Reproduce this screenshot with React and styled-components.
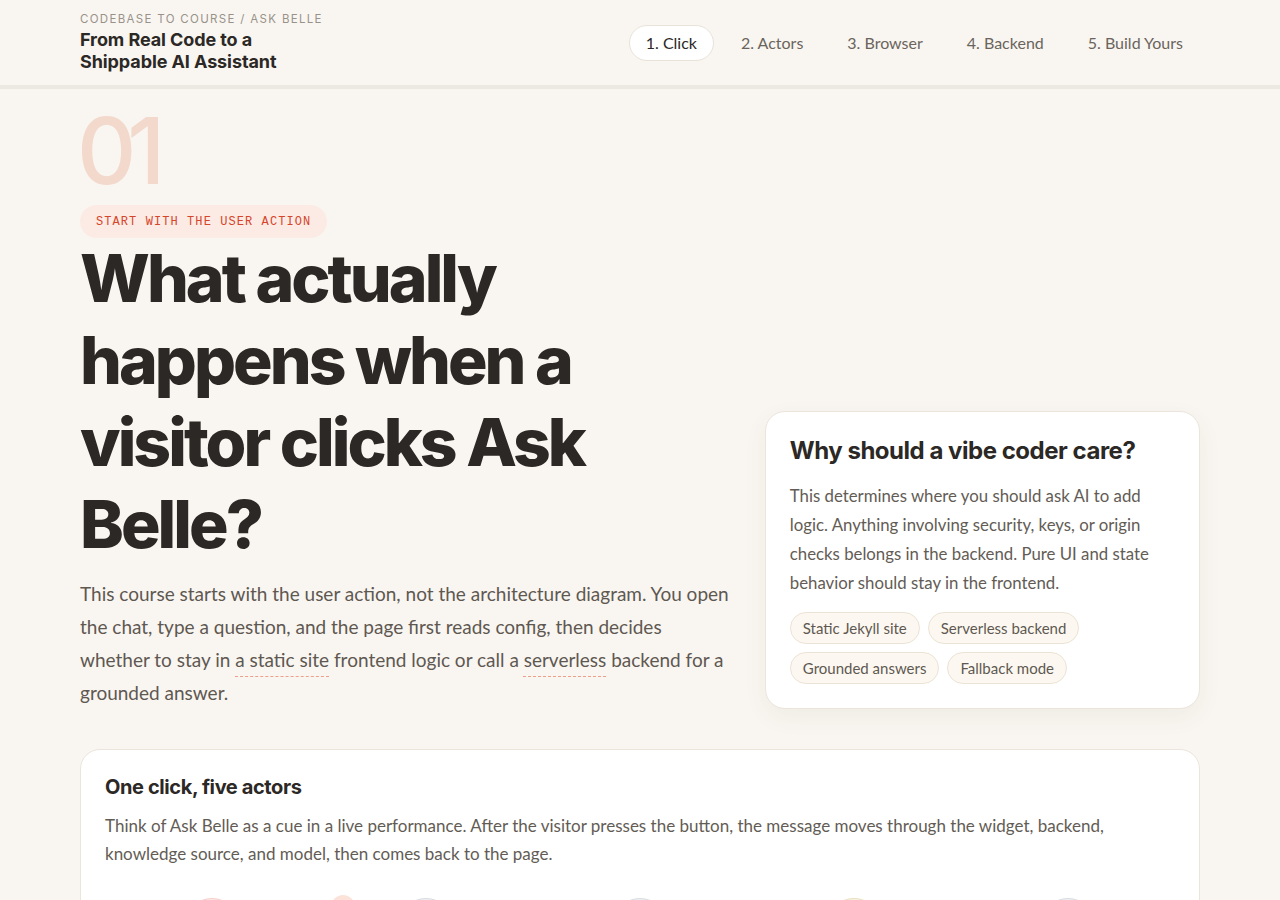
import React from "react";
import styled, { createGlobalStyle } from "styled-components";

const Global = createGlobalStyle`
  * { box-sizing: border-box; }
  html, body { margin: 0; padding: 0; }
  body {
    background: #f9f6f1;
    font-family: "Lato", "Noto Sans", sans-serif;
    color: #2b2825;
  }
`;

const Page = styled.div`
  min-height: 900px;
  background: #f9f6f1;
`;

const TopBar = styled.header`
  border-bottom: 4px solid #ece8e2;
  background: #f9f6f1;
`;

const TopInner = styled.div`
  max-width: 1120px;
  margin: 0 auto;
  height: 85px;
  display: flex;
  align-items: center;
  justify-content: space-between;
`;

const Brand = styled.div`
  display: flex;
  flex-direction: column;
  gap: 3px;
`;

const Crumb = styled.div`
  font-family: "Inter", sans-serif;
  font-size: 11.5px;
  letter-spacing: 0.115em;
  color: #98928a;
  text-transform: uppercase;
`;

const BrandTitle = styled.div`
  font-family: "Inter", sans-serif;
  font-weight: 700;
  font-size: 18px;
  line-height: 22px;
  letter-spacing: -0.005em;
  color: #2b2825;
  width: 220px;
`;

const Nav = styled.nav`
  display: flex;
  gap: 10px;
`;

const NavItem = styled.a`
  font-family: "Lato", sans-serif;
  font-size: 16px;
  height: 36px;
  padding: 0 16px;
  display: flex;
  align-items: center;
  border-radius: 999px;
  border: 1px solid ${(p) => (p.$active ? "#e9e2d8" : "transparent")};
  background: ${(p) => (p.$active ? "#ffffff" : "transparent")};
  color: ${(p) => (p.$active ? "#2b2825" : "#6b645c")};
  text-decoration: none;
`;

const Main = styled.main`
  max-width: 1120px;
  margin: 0 auto;
  padding-top: 16px;
`;

const Hero = styled.section`
  display: grid;
  grid-template-columns: 1.5fr 1fr;
  gap: 32px;
  align-items: end;
`;

const HeroText = styled.div`
  display: flex;
  flex-direction: column;
  align-items: flex-start;
`;

const StepNum = styled.div`
  font-family: "Inter", sans-serif;
  font-weight: 500;
  font-size: 92px;
  line-height: 92px;
  letter-spacing: -0.1em;
  color: #f3d8cc;
  margin-left: -3px;
`;

const Label = styled.span`
  margin-top: 8px;
  font-family: "Liberation Mono", "DejaVu Sans Mono", monospace;
  font-size: 12px;
  letter-spacing: 0.09em;
  color: #d5452a;
  background: #fcebe5;
  border-radius: 999px;
  height: 33px;
  padding: 0 16px;
  display: flex;
  align-items: center;
`;

const Headline = styled.h1`
  margin: -1px 0 0;
  font-family: "Inter", sans-serif;
  font-weight: 800;
  font-size: 66px;
  line-height: 82px;
  letter-spacing: -0.045em;
  color: #2b2825;
  max-width: 540px;
`;

const Lead = styled.p`
  margin: 12px 0 0;
  font-size: 19px;
  line-height: 33px;
  color: #5f5851;
`;

const Term = styled.span`
  text-decoration: underline dashed #ee9f8a 1px;
  text-underline-offset: 9px;
`;

const Card = styled.div`
  background: #ffffff;
  border: 1px solid #ebe5dc;
  border-radius: 20px;
  box-shadow: 0 8px 24px rgba(80, 60, 30, 0.06);
  padding: 24px;
`;

const CardTitle = styled.h2`
  margin: 0;
  font-family: "Inter", sans-serif;
  font-weight: 700;
  font-size: 24px;
  line-height: 30px;
  letter-spacing: -0.02em;
  color: #2b2825;
`;

const CardBody = styled.p`
  margin: 15px 0 0;
  font-size: 16.8px;
  line-height: 29px;
  color: #635c55;
`;

const Tags = styled.div`
  margin-top: 15px;
  display: flex;
  flex-wrap: wrap;
  gap: 8px;
`;

const Tag = styled.span`
  height: 32px;
  padding: 0 12px;
  display: flex;
  align-items: center;
  border-radius: 999px;
  border: 1px solid #ebe3d5;
  background: #fcf8f1;
  font-size: 15px;
  color: #5f5851;
`;

const Panel = styled.section`
  margin-top: 40px;
  background: #ffffff;
  border: 1px solid #ebe5dc;
  border-radius: 20px;
  padding: 24px 24px 40px;
`;

const PanelTitle = styled.h3`
  margin: 0;
  font-family: "Inter", sans-serif;
  font-weight: 700;
  font-size: 20px;
  line-height: 26px;
  letter-spacing: -0.02em;
  color: #2b2825;
`;

const PanelBody = styled.p`
  margin: 12px 0 0;
  font-size: 17px;
  line-height: 28px;
  color: #635c55;
  max-width: 1010px;
`;

const Actors = styled.div`
  margin-top: 30px;
  display: grid;
  grid-template-columns: repeat(5, 1fr);
  position: relative;
`;

const Actor = styled.div`
  display: flex;
  flex-direction: column;
  align-items: center;
  gap: 10px;
`;

const Avatar = styled.div`
  width: 56px;
  height: 56px;
  border-radius: 50%;
  background: ${(p) => p.$bg};
  border: 1px solid ${(p) => p.$border};
`;

const ActorName = styled.div`
  font-size: 14px;
  color: #5f5851;
`;

const Packet = styled.div`
  position: absolute;
  left: 226px;
  top: -3px;
  width: 24px;
  height: 24px;
  border-radius: 50%;
  background: #fbe3d9;
`;

const navItems = ["1. Click", "2. Actors", "3. Browser", "4. Backend", "5. Build Yours"];
const tags = ["Static Jekyll site", "Serverless backend", "Grounded answers", "Fallback mode"];
const actors = [
  { name: "Visitor", bg: "#fde8e6", border: "#f5cfcb" },
  { name: "Widget", bg: "#eef0f2", border: "#d7dce0" },
  { name: "Backend", bg: "#eef0f2", border: "#d7dce0" },
  { name: "Knowledge", bg: "#f8f3df", border: "#e9e0bf" },
  { name: "Model", bg: "#eef0f2", border: "#d7dce0" },
];

export default function App() {
  return (
    <Page>
      <Global />
      <TopBar>
        <TopInner>
          <Brand>
            <Crumb>Codebase to Course / Ask Belle</Crumb>
            <BrandTitle>From Real Code to a Shippable AI Assistant</BrandTitle>
          </Brand>
          <Nav>
            {navItems.map((n, i) => (
              <NavItem key={n} $active={i === 0} href="#">
                {n}
              </NavItem>
            ))}
          </Nav>
        </TopInner>
      </TopBar>
      <Main>
        <Hero>
          <HeroText>
            <StepNum>01</StepNum>
            <Label>START WITH THE USER ACTION</Label>
            <Headline>What actually happens when a visitor clicks Ask Belle?</Headline>
            <Lead>
              This course starts with the user action, not the architecture diagram. You open the
              chat, type a question, and the page first reads config, then decides whether to stay
              in <Term>a static site</Term> frontend logic or call a <Term>serverless</Term> backend
              for a grounded answer.
            </Lead>
          </HeroText>
          <Card>
            <CardTitle>Why should a vibe coder care?</CardTitle>
            <CardBody>
              This determines where you should ask AI to add logic. Anything involving security,
              keys, or origin checks belongs in the backend. Pure UI and state behavior should stay
              in the frontend.
            </CardBody>
            <Tags>
              {tags.map((t) => (
                <Tag key={t}>{t}</Tag>
              ))}
            </Tags>
          </Card>
        </Hero>
        <Panel>
          <PanelTitle>One click, five actors</PanelTitle>
          <PanelBody>
            Think of Ask Belle as a cue in a live performance. After the visitor presses the button,
            the message moves through the widget, backend, knowledge source, and model, then comes
            back to the page.
          </PanelBody>
          <Actors>
            <Packet />
            {actors.map((a) => (
              <Actor key={a.name}>
                <Avatar $bg={a.bg} $border={a.border} />
                <ActorName>{a.name}</ActorName>
              </Actor>
            ))}
          </Actors>
        </Panel>
      </Main>
    </Page>
  );
}
